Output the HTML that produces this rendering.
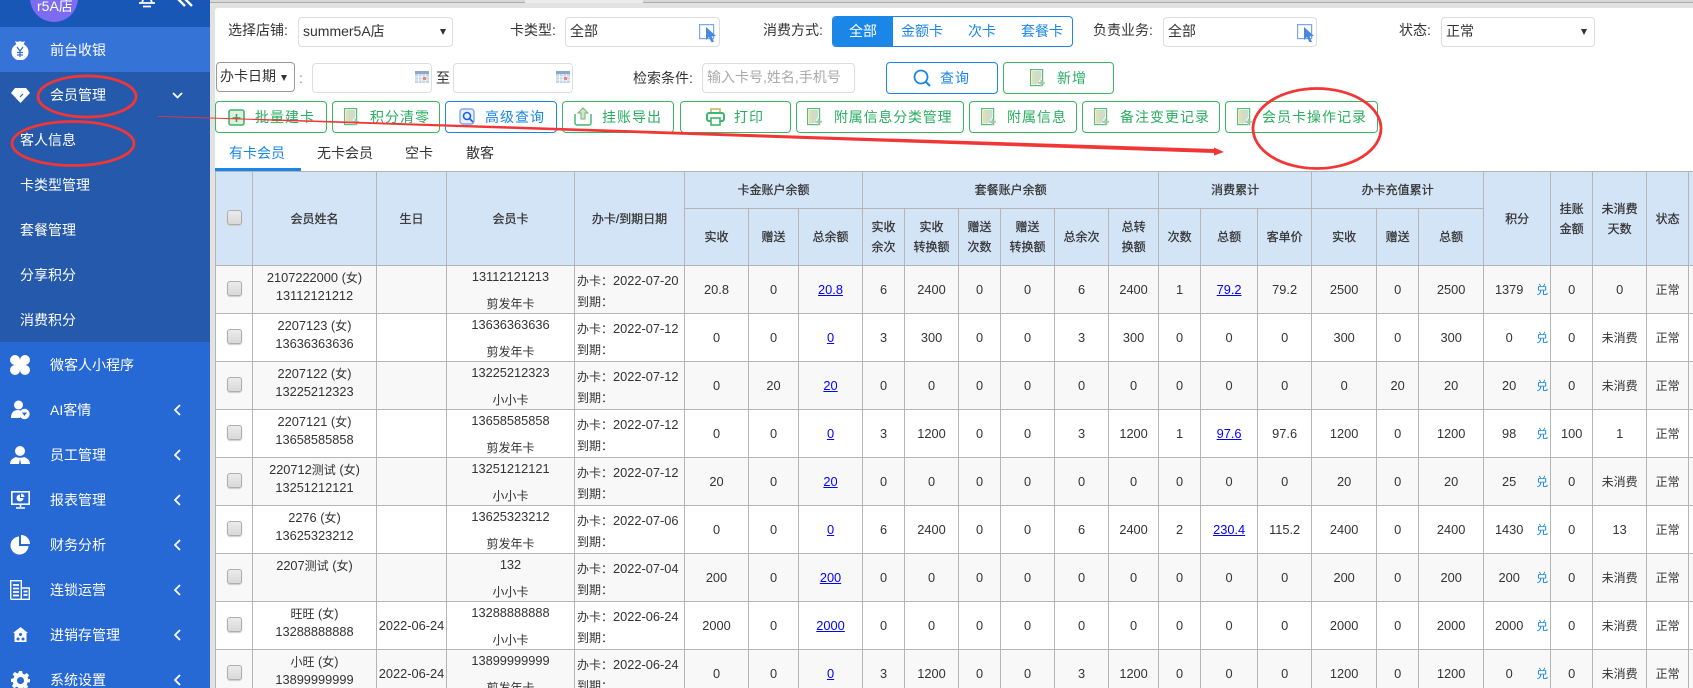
<!DOCTYPE html>
<html lang="zh"><head><meta charset="utf-8"><title>客人信息</title>
<style>
*{box-sizing:border-box}
html,body{margin:0;padding:0;width:1693px;height:688px;overflow:hidden;background:#e2e2e2}
body{position:relative;font-family:"Liberation Sans","Noto Sans CJK SC",sans-serif;color:#333;font-size:14px}
.a{position:absolute;white-space:nowrap}
#side{left:0;top:0;width:210px;height:688px;background:#2668d4;color:#fff;overflow:hidden}
#side .t{position:absolute;font-size:14px;line-height:20px;white-space:nowrap;color:#fff}
#side svg{position:absolute}
#main{left:215px;top:8px;width:1478px;height:680px;background:#fff;border-radius:3px 0 0 0}
.box{position:absolute;border:1px solid #ddd;border-radius:4px;background:#fff;line-height:27px;padding-left:4px;color:#333;white-space:nowrap}
.lb{position:absolute;line-height:20px;white-space:nowrap;color:#333}
.btn{position:absolute;top:101px;height:32px;border:1px solid #3cb564;border-radius:4px;background:#fff}
.btn.b{border-color:#1a86e8}
.bt{position:absolute;line-height:20px;white-space:nowrap;color:#27ae60;letter-spacing:1px}
.bt.b{color:#1a86e8}
.tb{position:absolute;top:143px;line-height:20px;white-space:nowrap;color:#333}
.arr{position:absolute;width:0;height:0;border-left:3.5px solid transparent;border-right:3.5px solid transparent;border-top:6px solid #333}
svg.i{position:absolute;overflow:visible}
#tbl{position:absolute;left:215px;top:171px;border-collapse:collapse;table-layout:fixed;width:1493px}
#tbl th,#tbl td{border:1px solid #b5b5b5;padding:0;text-align:center;overflow:visible;font-weight:normal}
#tbl th{background:#d4e4f7;font-size:12px;line-height:20px;color:#333;-webkit-text-stroke:.25px #333}
#tbl td{font-size:12.8px;height:48px;line-height:18px;color:#333;position:relative;vertical-align:middle}
#tbl tr.o td{background:#f8f8f8}
#tbl tr.e td{background:#fff}
#tbl i{font-style:normal;font-size:12px}
#tbl a{color:#00f;text-decoration:underline}
.cb{display:block;position:relative;top:-1px;width:15px;height:15px;margin:0 auto;border:1px solid #adadad;border-radius:3px;background:linear-gradient(#ebebeb,#d9d9d9);box-shadow:0 1px 1px #ccc}
.n{height:47px;position:relative;top:3px;line-height:18px}
.c{height:47px;position:relative;top:-3px;line-height:27px}
.d{height:47px;position:relative;top:5px;line-height:20.5px;text-align:left;padding-left:2px;white-space:nowrap}
#tbl td.p{padding-right:16px}
.x{position:absolute;right:2px;top:15px;color:#1a86e8;font-size:12px;line-height:18px}
#top span{position:absolute;top:0;height:3px;border-bottom:1px solid #aaa;background:#d8d8d8}
</style></head><body>
<svg width="0" height="0" style="position:absolute"><defs>
<symbol id="doc" viewBox="0 0 16 18"><rect x=".6" y=".6" width="12" height="16" fill="#fff" stroke="#5cbb7c" stroke-width="1.200"/><path d="M2 2h9.500v6.500L6.500 15.500H2z" fill="#cfdccb"/><path d="M2 2h2.500v13.500H2z" fill="#e6dfa8"/><path d="M11.500 10.500v6.500M8 13.800h7" stroke="#a5c9ae" stroke-width="1.800"/></symbol>
<symbol id="cur" viewBox="0 0 18 18"><rect x=".6" y=".6" width="14" height="14" fill="#fff" stroke="#7ba8ea" stroke-width="1.200"/><path d="M7 3l10 9-4.500.5L15 18l-2.500 .5L10 13l-3 3z" fill="#4a88e0"/></symbol>
<symbol id="cal" viewBox="0 0 14 12"><rect width="14" height="12" fill="#c5d3e8"/><rect y="0" width="14" height="3" fill="#8fa6c9"/><path d="M3.500 3v9M7 3v9M10.500 3v9M0 6h14M0 9h14" stroke="#fff" stroke-width=".7"/><rect x="8" y="6" width="3" height="3" fill="#e08a7a"/></symbol>
</defs></svg>

<div id="top" class="a" style="left:210px;top:0;width:1483px;height:8px">
<span style="left:0;width:97px"></span><span style="left:97px;width:108px"></span><span style="left:205px;width:110px"></span><span style="left:315px;width:118px;background:#ebebeb;border:0"></span><span style="left:433px;width:108px"></span><span style="left:541px;width:942px"></span>
</div>

<div id="side" class="a">
<div class="a" style="left:0;top:0;width:210px;height:27px;background:#1857b6"></div>
<div class="a" style="left:30px;top:-26px;width:48px;height:48px;border-radius:50%;background:#7d6bf2"></div>
<div class="t" style="left:37px;top:-4px;font-size:14px">r5A店</div>
<svg style="left:138px;top:-6px" width="18" height="14" viewBox="0 0 18 14"><path d="M4 9c1-2 1-8 5-8s4 6 5 8z M1 9h16M5 12.500h8" fill="none" stroke="#fff" stroke-width="1.800"/></svg>
<svg style="left:176px;top:-8px" width="18" height="16" viewBox="0 0 18 16"><path d="M2 7l7 7M9 7l7 7" stroke="#fff" stroke-width="2.400" fill="none"/></svg>

<div class="a" style="left:0;top:27px;width:210px;height:45px;background:#3574d6"></div>
<div class="a" style="left:0;top:72px;width:210px;height:270px;background:#2459ac"></div>

<svg style="left:10px;top:40px" width="20" height="20" viewBox="0 0 20 20"><circle cx="10" cy="12" r="8.500" fill="#fff"/><path d="M5 1c2 1 3 1 5 0 2 1 3 1 5 0l-2 5H7z" fill="#fff"/><path d="M7 7l3 4 3-4M10 11v6M7 12.500h6M7 15h6" stroke="#3574d6" stroke-width="1.300" fill="none"/></svg>
<div class="t" style="left:50px;top:40px">前台收银</div>

<svg style="left:11px;top:88px" width="19" height="15" viewBox="0 0 19 15"><path d="M4 0h11l4 5-9.500 10L0 5z" fill="#fff"/><path d="M9 9l3-3" stroke="#2459ac" stroke-width="1.200"/></svg>
<div class="t" style="left:50px;top:85px">会员管理</div>
<svg style="left:172px;top:92px" width="11" height="7" viewBox="0 0 11 7"><path d="M1 1l4.500 4.500L10 1" stroke="#fff" stroke-width="1.800" fill="none"/></svg>

<div class="t" style="left:20px;top:130px">客人信息</div>
<div class="t" style="left:20px;top:175px">卡类型管理</div>
<div class="t" style="left:20px;top:220px">套餐管理</div>
<div class="t" style="left:20px;top:265px">分享积分</div>
<div class="t" style="left:20px;top:310px">消费积分</div>

<svg style="left:10px;top:355px" width="20" height="20" viewBox="0 0 20 20"><g fill="#fff"><circle cx="5" cy="5" r="5"/><circle cx="15" cy="5" r="5"/><circle cx="5" cy="15" r="5"/><circle cx="15" cy="15" r="5"/><rect x="5.500" y="5.500" width="9" height="9"/></g></svg>
<div class="t" style="left:50px;top:355px">微客人小程序</div>

<svg style="left:11px;top:400px" width="19" height="20" viewBox="0 0 19 20"><circle cx="7.500" cy="5" r="4.500" fill="#fff"/><path d="M0 18c0-6 3-8 7-8 1 0 3 1 3 1l-1 7z" fill="#fff"/><circle cx="13.500" cy="14" r="5.200" fill="#fff"/><path d="M11 12.500h5l-2.500 3.500z" fill="#2668d4"/></svg>
<div class="t" style="left:50px;top:400px">AI客情</div>

<svg style="left:10px;top:446px" width="20" height="18" viewBox="0 0 20 18"><circle cx="10" cy="5" r="5" fill="#fff"/><path d="M0 18c0-4 3-6 6-7 2 1 6 1 8 0 3 1 6 3 6 7z" fill="#fff"/><path d="M10 13l-1 5h2z" fill="#2668d4"/></svg>
<div class="t" style="left:50px;top:445px">员工管理</div>

<svg style="left:11px;top:491px" width="19" height="18" viewBox="0 0 19 18"><rect x=".8" y=".8" width="17.400" height="12.400" fill="none" stroke="#fff" stroke-width="1.600"/><path d="M9 3.500a3.500 3.500 0 1 0 3.500 3.500H9z" fill="#fff"/><path d="M10 2.500a3.500 3.500 0 0 1 3.500 3.500H10z" fill="#fff"/><path d="M9.500 13v3M5 17h9" stroke="#fff" stroke-width="1.600"/></svg>
<div class="t" style="left:50px;top:490px">报表管理</div>

<svg style="left:10px;top:535px" width="20" height="20" viewBox="0 0 20 20"><path d="M9 1.500a9 9 0 1 0 9.500 9.500H9z" fill="#fff"/><path d="M11 0a9 9 0 0 1 9 9h-9z" fill="#fff"/></svg>
<div class="t" style="left:50px;top:535px">财务分析</div>

<svg style="left:10px;top:580px" width="20" height="20" viewBox="0 0 20 20"><path d="M.7 19.300V.7h10.600v18.600M11.300 8h8v11.300H.7" fill="none" stroke="#fff" stroke-width="1.400"/><path d="M3 5h6M3 8.500h6M3 12h6M3 15.500h6M13.500 11.500h4M13.500 15h4" stroke="#fff" stroke-width="1.800"/></svg>
<div class="t" style="left:50px;top:580px">连锁运营</div>

<svg style="left:13px;top:627px" width="15" height="15" viewBox="0 0 15 15"><path d="M7.500 0L15 6h-1.500v9h-12V6H0z" fill="#fff"/><circle cx="7.500" cy="7.500" r="1.500" fill="#2668d4"/><circle cx="5" cy="12" r="1.500" fill="#2668d4"/><circle cx="10" cy="12" r="1.500" fill="#2668d4"/></svg>
<div class="t" style="left:50px;top:625px">进销存管理</div>

<svg style="left:11px;top:671px" width="19" height="19" viewBox="0 0 24 24"><path fill="#fff" fill-rule="evenodd" d="M10 0h4l.7 3.400 2.300 1 3-1.900 2.800 2.800-1.900 3 1 2.300L24 10v4l-3.100.7-1 2.300 1.900 3-2.800 2.800-3-1.900-2.300 1L14 24h-4l-.7-3.100-2.300-1-3 1.900-2.800-2.800 1.900-3-1-2.300L0 14v-4l3.100-.7 1-2.300-1.900-3L5 1.200l3 1.900 1.300-.6zM12 7.500a4.500 4.500 0 1 0 0 9 4.500 4.500 0 0 0 0-9z"/></svg>
<div class="t" style="left:50px;top:670px">系统设置</div>

<svg style="left:174px;top:404px" width="7" height="12" viewBox="0 0 7 12"><path d="M6 1L1 6l5 5" stroke="#fff" stroke-width="1.800" fill="none"/></svg>
<svg style="left:174px;top:449px" width="7" height="12" viewBox="0 0 7 12"><path d="M6 1L1 6l5 5" stroke="#fff" stroke-width="1.800" fill="none"/></svg>
<svg style="left:174px;top:494px" width="7" height="12" viewBox="0 0 7 12"><path d="M6 1L1 6l5 5" stroke="#fff" stroke-width="1.800" fill="none"/></svg>
<svg style="left:174px;top:539px" width="7" height="12" viewBox="0 0 7 12"><path d="M6 1L1 6l5 5" stroke="#fff" stroke-width="1.800" fill="none"/></svg>
<svg style="left:174px;top:584px" width="7" height="12" viewBox="0 0 7 12"><path d="M6 1L1 6l5 5" stroke="#fff" stroke-width="1.800" fill="none"/></svg>
<svg style="left:174px;top:629px" width="7" height="12" viewBox="0 0 7 12"><path d="M6 1L1 6l5 5" stroke="#fff" stroke-width="1.800" fill="none"/></svg>
<svg style="left:174px;top:674px" width="7" height="12" viewBox="0 0 7 12"><path d="M6 1L1 6l5 5" stroke="#fff" stroke-width="1.800" fill="none"/></svg>
</div>

<div id="main" class="a"></div>

<div class="lb" style="left:228px;top:20px">选择店铺:</div>
<div class="box" style="left:298px;top:17px;width:155px;height:30px">summer5A店</div>
<div class="arr" style="left:440px;top:29px"></div>

<div class="lb" style="left:510px;top:20px">卡类型:</div>
<div class="box" style="left:565px;top:17px;width:155px;height:30px">全部</div>
<svg class="i" style="left:699px;top:24px" width="18" height="18"><use href="#cur"/></svg>

<div class="lb" style="left:763px;top:20px">消费方式:</div>
<div class="a" style="left:832px;top:16px;width:241px;height:31px;border:1px solid #1a86e8;border-radius:4px;background:#fff;overflow:hidden">
<div class="a" style="left:0;top:0;width:60px;height:29px;background:#1a86e8"></div>
<div class="a" style="left:16px;top:4px;line-height:20px;color:#fff">全部</div>
<div class="a" style="left:68px;top:4px;line-height:20px;color:#1a86e8">金额卡</div>
<div class="a" style="left:135px;top:4px;line-height:20px;color:#1a86e8">次卡</div>
<div class="a" style="left:188px;top:4px;line-height:20px;color:#1a86e8">套餐卡</div>
</div>

<div class="lb" style="left:1093px;top:20px">负责业务:</div>
<div class="box" style="left:1163px;top:17px;width:154px;height:30px">全部</div>
<svg class="i" style="left:1297px;top:24px" width="18" height="18"><use href="#cur"/></svg>

<div class="lb" style="left:1399px;top:20px">状态:</div>
<div class="box" style="left:1441px;top:17px;width:154px;height:30px">正常</div>
<div class="arr" style="left:1581px;top:29px"></div>

<div class="box" style="left:216px;top:62px;width:79px;height:30px;border-color:#999;padding-left:3px">办卡日期</div>
<div class="arr" style="left:281px;top:75px"></div>
<div class="lb" style="left:299px;top:68px;color:#888">:</div>
<div class="box" style="left:312px;top:63px;width:120px;height:30px"></div>
<svg class="i" style="left:415px;top:71px" width="14" height="12"><use href="#cal"/></svg>
<div class="lb" style="left:436px;top:68px">至</div>
<div class="box" style="left:453px;top:63px;width:120px;height:30px"></div>
<svg class="i" style="left:556px;top:71px" width="14" height="12"><use href="#cal"/></svg>
<div class="lb" style="left:633px;top:68px">检索条件:</div>
<div class="box" style="left:702px;top:63px;width:153px;height:30px;color:#aaa">输入卡号,姓名,手机号</div>

<div class="btn b" style="left:886px;top:62px;width:112px"></div>
<svg class="i" style="left:913px;top:69px" width="18" height="18" viewBox="0 0 18 18"><circle cx="8" cy="8" r="6.500" fill="none" stroke="#1a86e8" stroke-width="1.800"/><path d="M12.500 12.500L17 17" stroke="#1a86e8" stroke-width="2"/></svg>
<div class="bt b" style="left:940px;top:68px">查询</div>
<div class="btn" style="left:1003px;top:62px;width:111px"></div>
<svg class="i" style="left:1030px;top:69px" width="16" height="18"><use href="#doc"/></svg>
<div class="bt" style="left:1057px;top:68px">新增</div>

<div class="btn" style="left:215px;width:112px"></div>
<svg class="i" style="left:228px;top:108px" width="17" height="18" viewBox="0 0 17 18"><rect x="1" y="2" width="15" height="15" rx="2" fill="#dff0df" stroke="#3fb56d" stroke-width="1.600"/><path d="M8.500 6v8M4.500 10h8" stroke="#3a9a5a" stroke-width="1.500"/></svg>
<div class="bt" style="left:255px;top:107px">批量建卡</div>

<div class="btn" style="left:332px;width:108px"></div>
<svg class="i" style="left:344px;top:108px" width="16" height="18"><use href="#doc"/></svg>
<div class="bt" style="left:370px;top:107px">积分清零</div>

<div class="btn b" style="left:445px;width:112px"></div>
<svg class="i" style="left:459px;top:108px" width="16" height="18" viewBox="0 0 16 18"><rect x="1" y="1" width="14" height="15" rx="3" fill="#eaf0ff" stroke="#7ba8ea" stroke-width="1.400"/><circle cx="8" cy="8" r="3.500" fill="none" stroke="#1a5fe0" stroke-width="1.600"/><path d="M10.500 10.500L14 14" stroke="#1a5fe0" stroke-width="1.600"/></svg>
<div class="bt b" style="left:485px;top:107px">高级查询</div>

<div class="btn" style="left:562px;width:112px"></div>
<svg class="i" style="left:574px;top:107px" width="18" height="19" viewBox="0 0 18 19"><path d="M1 7v9a2 2 0 0 0 2 2h12a2 2 0 0 0 2-2V7" fill="none" stroke="#3fb56d" stroke-width="1.400"/><path d="M9 1l-5 5h3v6h4V6h3z" fill="#d8e6c4" stroke="#6ab57a" stroke-width="1"/></svg>
<div class="bt" style="left:602px;top:107px">挂账导出</div>

<div class="btn" style="left:680px;width:111px"></div>
<svg class="i" style="left:706px;top:108px" width="19" height="18" viewBox="0 0 19 18"><path d="M5 5V1h9v4" fill="none" stroke="#c8b463" stroke-width="1.600"/><rect x="1" y="5" width="17" height="8" rx="2" fill="#fff" stroke="#3fb56d" stroke-width="2"/><rect x="5" y="10" width="9" height="7" fill="#fff" stroke="#3fb56d" stroke-width="1.600"/></svg>
<div class="bt" style="left:734px;top:107px">打印</div>

<div class="btn" style="left:796px;width:168px"></div>
<svg class="i" style="left:807px;top:108px" width="16" height="18"><use href="#doc"/></svg>
<div class="bt" style="left:834px;top:107px;letter-spacing:.8px">附属信息分类管理</div>

<div class="btn" style="left:969px;width:108px"></div>
<svg class="i" style="left:981px;top:108px" width="16" height="18"><use href="#doc"/></svg>
<div class="bt" style="left:1007px;top:107px">附属信息</div>

<div class="btn" style="left:1082px;width:138px"></div>
<svg class="i" style="left:1094px;top:108px" width="16" height="18"><use href="#doc"/></svg>
<div class="bt" style="left:1120px;top:107px">备注变更记录</div>

<div class="btn" style="left:1225px;width:153px"></div>
<svg class="i" style="left:1237px;top:108px" width="16" height="18"><use href="#doc"/></svg>
<div class="bt" style="left:1262px;top:107px">会员卡操作记录</div>

<div class="a" style="left:215px;top:168px;width:86px;height:3px;background:#1a86e8"></div>
<div class="tb" style="left:229px;color:#1a86e8">有卡会员</div>
<div class="tb" style="left:317px">无卡会员</div>
<div class="tb" style="left:405px">空卡</div>
<div class="tb" style="left:466px">散客</div>

<table id="tbl">
<colgroup><col style="width:37px"><col style="width:124px"><col style="width:70px"><col style="width:128px"><col style="width:110px"><col style="width:64px"><col style="width:50px"><col style="width:64px"><col style="width:42px"><col style="width:54px"><col style="width:42px"><col style="width:54px"><col style="width:54px"><col style="width:50px"><col style="width:42px"><col style="width:57px"><col style="width:54px"><col style="width:65px"><col style="width:42px"><col style="width:65px"><col style="width:67px"><col style="width:42px"><col style="width:54px"><col style="width:42px"><col style="width:20px"></colgroup>
<tr style="height:37px">
<th rowspan="2"><span class="cb"></span></th><th rowspan="2">会员姓名</th><th rowspan="2">生日</th><th rowspan="2">会员卡</th><th rowspan="2">办卡/到期日期</th>
<th colspan="3">卡金账户余额</th><th colspan="6">套餐账户余额</th><th colspan="3">消费累计</th><th colspan="3">办卡充值累计</th>
<th rowspan="2">积分</th><th rowspan="2">挂账<br>金额</th><th rowspan="2">未消费<br>天数</th><th rowspan="2">状态</th><th rowspan="2"></th>
</tr>
<tr style="height:57px">
<th>实收</th><th>赠送</th><th>总余额</th><th>实收<br>余次</th><th>实收<br>转换额</th><th>赠送<br>次数</th><th>赠送<br>转换额</th><th>总余次</th><th>总转<br>换额</th><th>次数</th><th>总额</th><th>客单价</th><th>实收</th><th>赠送</th><th>总额</th>
</tr>
<tr class="o"><td><span class="cb"></span></td><td><div class="n">2107222000 (<i>女</i>)<br>13112121212</div></td><td></td><td><div class="c">13112121213<br><i>剪发年卡</i></div></td><td><div class="d"><i>办卡：</i>2022-07-20<br><i>到期：</i></div></td><td>20.8</td><td>0</td><td><a>20.8</a></td><td>6</td><td>2400</td><td>0</td><td>0</td><td>6</td><td>2400</td><td>1</td><td><a>79.2</a></td><td>79.2</td><td>2500</td><td>0</td><td>2500</td><td class="p">1379<span class="x">兑</span></td><td>0</td><td>0</td><td><i>正常</i></td><td></td></tr>
<tr class="e"><td><span class="cb"></span></td><td><div class="n">2207123 (<i>女</i>)<br>13636363636</div></td><td></td><td><div class="c">13636363636<br><i>剪发年卡</i></div></td><td><div class="d"><i>办卡：</i>2022-07-12<br><i>到期：</i></div></td><td>0</td><td>0</td><td><a>0</a></td><td>3</td><td>300</td><td>0</td><td>0</td><td>3</td><td>300</td><td>0</td><td>0</td><td>0</td><td>300</td><td>0</td><td>300</td><td class="p">0<span class="x">兑</span></td><td>0</td><td><i>未消费</i></td><td><i>正常</i></td><td></td></tr>
<tr class="o"><td><span class="cb"></span></td><td><div class="n">2207122 (<i>女</i>)<br>13225212323</div></td><td></td><td><div class="c">13225212323<br><i>小小卡</i></div></td><td><div class="d"><i>办卡：</i>2022-07-12<br><i>到期：</i></div></td><td>0</td><td>20</td><td><a>20</a></td><td>0</td><td>0</td><td>0</td><td>0</td><td>0</td><td>0</td><td>0</td><td>0</td><td>0</td><td>0</td><td>20</td><td>20</td><td class="p">20<span class="x">兑</span></td><td>0</td><td><i>未消费</i></td><td><i>正常</i></td><td></td></tr>
<tr class="e"><td><span class="cb"></span></td><td><div class="n">2207121 (<i>女</i>)<br>13658585858</div></td><td></td><td><div class="c">13658585858<br><i>剪发年卡</i></div></td><td><div class="d"><i>办卡：</i>2022-07-12<br><i>到期：</i></div></td><td>0</td><td>0</td><td><a>0</a></td><td>3</td><td>1200</td><td>0</td><td>0</td><td>3</td><td>1200</td><td>1</td><td><a>97.6</a></td><td>97.6</td><td>1200</td><td>0</td><td>1200</td><td class="p">98<span class="x">兑</span></td><td>100</td><td>1</td><td><i>正常</i></td><td></td></tr>
<tr class="o"><td><span class="cb"></span></td><td><div class="n">220712<i>测试</i> (<i>女</i>)<br>13251212121</div></td><td></td><td><div class="c">13251212121<br><i>小小卡</i></div></td><td><div class="d"><i>办卡：</i>2022-07-12<br><i>到期：</i></div></td><td>20</td><td>0</td><td><a>20</a></td><td>0</td><td>0</td><td>0</td><td>0</td><td>0</td><td>0</td><td>0</td><td>0</td><td>0</td><td>20</td><td>0</td><td>20</td><td class="p">25<span class="x">兑</span></td><td>0</td><td><i>未消费</i></td><td><i>正常</i></td><td></td></tr>
<tr class="e"><td><span class="cb"></span></td><td><div class="n">2276 (<i>女</i>)<br>13625323212</div></td><td></td><td><div class="c">13625323212<br><i>剪发年卡</i></div></td><td><div class="d"><i>办卡：</i>2022-07-06<br><i>到期：</i></div></td><td>0</td><td>0</td><td><a>0</a></td><td>6</td><td>2400</td><td>0</td><td>0</td><td>6</td><td>2400</td><td>2</td><td><a>230.4</a></td><td>115.2</td><td>2400</td><td>0</td><td>2400</td><td class="p">1430<span class="x">兑</span></td><td>0</td><td>13</td><td><i>正常</i></td><td></td></tr>
<tr class="o"><td><span class="cb"></span></td><td><div class="n">2207<i>测试</i> (<i>女</i>)</div></td><td></td><td><div class="c">132<br><i>小小卡</i></div></td><td><div class="d"><i>办卡：</i>2022-07-04<br><i>到期：</i></div></td><td>200</td><td>0</td><td><a>200</a></td><td>0</td><td>0</td><td>0</td><td>0</td><td>0</td><td>0</td><td>0</td><td>0</td><td>0</td><td>200</td><td>0</td><td>200</td><td class="p">200<span class="x">兑</span></td><td>0</td><td><i>未消费</i></td><td><i>正常</i></td><td></td></tr>
<tr class="e"><td><span class="cb"></span></td><td><div class="n"><i>旺旺</i> (<i>女</i>)<br>13288888888</div></td><td>2022-06-24</td><td><div class="c">13288888888<br><i>小小卡</i></div></td><td><div class="d"><i>办卡：</i>2022-06-24<br><i>到期：</i></div></td><td>2000</td><td>0</td><td><a>2000</a></td><td>0</td><td>0</td><td>0</td><td>0</td><td>0</td><td>0</td><td>0</td><td>0</td><td>0</td><td>2000</td><td>0</td><td>2000</td><td class="p">2000<span class="x">兑</span></td><td>0</td><td><i>未消费</i></td><td><i>正常</i></td><td></td></tr>
<tr class="o"><td><span class="cb"></span></td><td><div class="n"><i>小旺</i> (<i>女</i>)<br>13899999999</div></td><td>2022-06-24</td><td><div class="c">13899999999<br><i>剪发年卡</i></div></td><td><div class="d"><i>办卡：</i>2022-06-24<br><i>到期：</i></div></td><td>0</td><td>0</td><td><a>0</a></td><td>3</td><td>1200</td><td>0</td><td>0</td><td>3</td><td>1200</td><td>0</td><td>0</td><td>0</td><td>1200</td><td>0</td><td>1200</td><td class="p">0<span class="x">兑</span></td><td>0</td><td><i>未消费</i></td><td><i>正常</i></td><td></td></tr>
</table>

<svg class="a" style="left:0;top:0;pointer-events:none" width="1693" height="688" viewBox="0 0 1693 688">
<ellipse cx="87" cy="96.500" rx="49" ry="20.500" fill="none" stroke="#f23636" stroke-width="2.800"/>
<ellipse cx="73" cy="143.500" rx="61" ry="22" fill="none" stroke="#f23636" stroke-width="2.800"/>
<ellipse cx="1317" cy="128.500" rx="64" ry="40" fill="none" stroke="#f23636" stroke-width="2.800"/>
<polygon points="158,116 500,126 1214,149 1214,147.500 1224,152 1214,155.500 1214,153 500,128.500 158,116.700" fill="#f23636"/>
</svg>
</body></html>
